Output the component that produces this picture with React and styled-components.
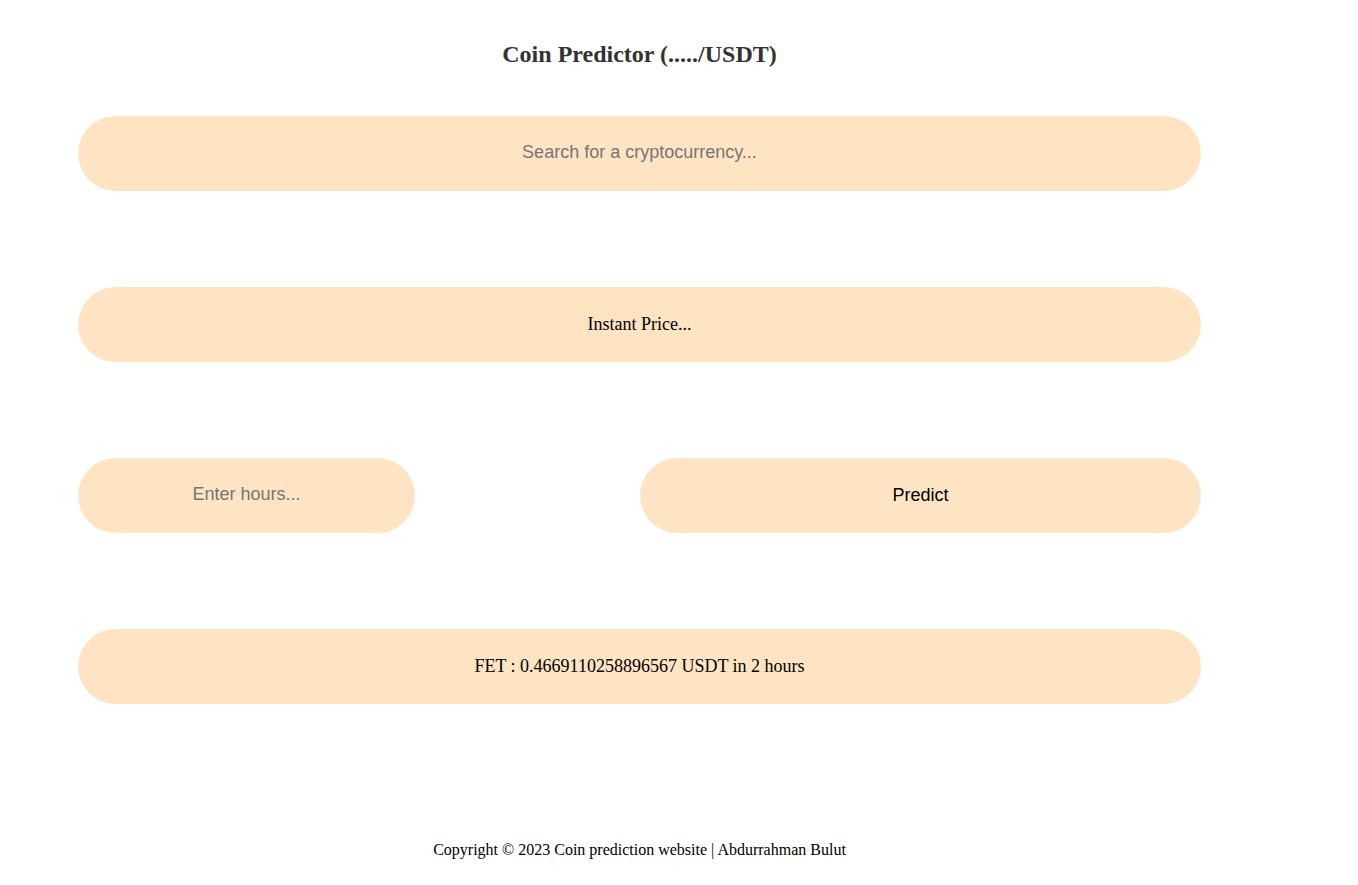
import React from "react";
import styled, { createGlobalStyle } from "styled-components";

const Global = createGlobalStyle`
  html, body { margin: 0; padding: 0; background: #ffffff; }
  body { font-family: "Liberation Serif", "Times New Roman", serif; color: #000; }
`;

const Page = styled.div`
  width: 1123px;
  margin-left: 78px;
  display: flex;
  flex-direction: column;
`;

const Title = styled.h1`
  margin: 40px 0 0;
  height: 28px;
  line-height: 28px;
  text-align: center;
  font-family: "Liberation Serif", "Times New Roman", serif;
  font-weight: bold;
  font-size: 24px;
  color: #333333;
`;

const Stack = styled.div`
  margin-top: 48px;
  display: flex;
  flex-direction: column;
  gap: 96px;
`;

const Pill = styled.div`
  box-sizing: border-box;
  height: 75px;
  width: ${(p) => p.$width || "100%"};
  border-radius: 38px;
  background: #ffe4c4;
  display: flex;
  align-items: center;
  justify-content: center;
  font-family: "Liberation Serif", "Times New Roman", serif;
  font-size: 18px;
  color: #000;
`;

const Input = styled.input`
  box-sizing: border-box;
  height: 75px;
  width: ${(p) => p.$width || "100%"};
  border: none;
  outline: none;
  border-radius: 38px;
  background: #ffe4c4;
  text-align: center;
  font-family: "Liberation Sans", Arial, sans-serif;
  font-size: 18px;
  color: #000;
  padding: 0 20px 2px;
  &::placeholder { color: #757575; }
`;

const Row = styled.div`
  display: flex;
  justify-content: space-between;
  align-items: center;
`;

const Button = styled.button`
  height: 75px;
  width: 561px;
  border: none;
  border-radius: 38px;
  background: #ffe4c4;
  font-family: "Liberation Sans", Arial, sans-serif;
  font-size: 18px;
  color: #000;
  cursor: pointer;
`;

const Footer = styled.footer`
  margin-top: 137px;
  text-align: center;
  font-family: "Liberation Serif", "Times New Roman", serif;
  font-size: 16px;
  line-height: 18px;
  color: #000;
`;

export default function App() {
  return (
    <>
      <Global />
      <Page>
        <Title>Coin Predictor (...../USDT)</Title>
        <Stack>
          <Input placeholder="Search for a cryptocurrency..." />
          <Pill>Instant Price...</Pill>
          <Row>
            <Input $width="337px" placeholder="Enter hours..." />
            <Button>Predict</Button>
          </Row>
          <Pill>FET : 0.4669110258896567 USDT in 2 hours</Pill>
        </Stack>
        <Footer>Copyright © 2023 Coin prediction website | Abdurrahman Bulut</Footer>
      </Page>
    </>
  );
}
